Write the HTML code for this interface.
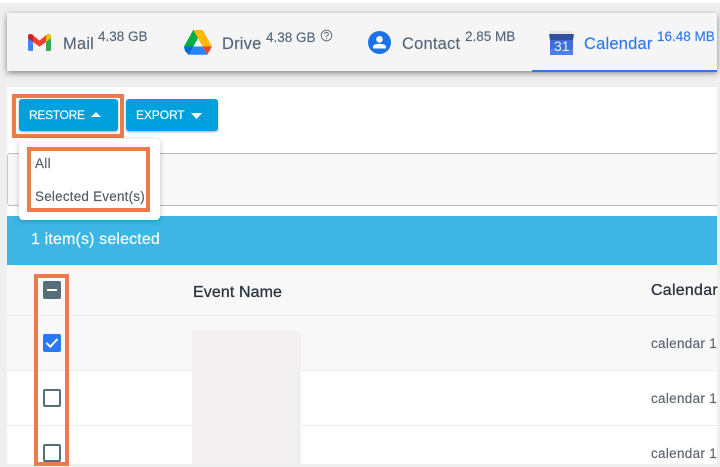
<!DOCTYPE html>
<html>
<head>
<meta charset="utf-8">
<style>
html,body{margin:0;padding:0;background:#fff}
#p{position:relative;width:720px;height:467px;overflow:hidden;background:#f0efef;font-family:"Liberation Sans",Arial,sans-serif;color:#56677a;-webkit-text-stroke:.15px currentColor}
#p div,#p span.a{position:absolute;white-space:nowrap}
.t{font-size:16.5px;line-height:20px;letter-spacing:.2px}
.s{font-size:13.5px;line-height:16px;letter-spacing:0}
.cb{left:43px;width:18px;height:18px;box-sizing:border-box;border-radius:2px}
.o{background:#ec7a4f}
.cell{font-size:13.5px;line-height:16px;color:#5a6470;left:651px;letter-spacing:.3px}
</style>
</head>
<body>
<div id="p">
<div style="left:0;top:0;width:720px;height:3px;background:#fff"></div>
<div style="left:7px;top:87px;width:710px;height:377px;background:#fff"></div>
<!-- tab bar -->
<div style="left:7px;top:13px;width:710px;height:58px;background:#f5f5f5;box-shadow:0 2px 6px rgba(0,0,0,.45)"></div>
<div style="left:532px;top:70px;width:185px;height:2px;background:#2979f2"></div>

<!-- gmail -->
<svg style="position:absolute;left:28px;top:34px" width="23" height="17" viewBox="0 0 23 17">
<path d="M0 3.5V15.5Q0 17 1.5 17H5V7Z" fill="#4285f4"/>
<path d="M23 3.5V15.5Q23 17 21.500 17H18V7Z" fill="#34a853"/>
<path d="M0 2.500Q0 0 2.500 0Q3.500 0 4.500 .8L11.500 6.500L18.500 .8Q19.500 0 20.500 0Q23 0 23 2.500V4L18 8L11.500 12.800L5 8L0 4Z" fill="#ea4335"/>
<path d="M18 1.300L18.500 .8Q19.500 0 20.500 0Q23 0 23 2.500V4L18 8Z" fill="#fbbc04"/>
<path d="M0 2.500Q0 0 2.500 0Q3.500 0 4.500 .8L5 1.300V8L0 4Z" fill="#c5221f"/>
</svg>
<div class="t" style="left:63px;top:34px">Mail</div>
<div class="s" style="left:98px;top:29px">4.38 GB</div>

<!-- drive -->
<svg style="position:absolute;left:184px;top:30px" width="28" height="25" viewBox="0 0 28 25">
<path d="M9.300 0H18.700L14 8.200H9.500L7 4Z" fill="#00832d"/>
<path d="M9.300 0L14 8.200L4.700 24.800L0 16.500Z" fill="#00ac47"/>
<path d="M18.700 0L28 16.500H18.700L9.300 0Z" fill="#ffba00"/>
<path d="M0 16.500H9.300L4.700 24.800L1 21Z" fill="#0066da"/>
<path d="M9.300 16.500H18.700L23.300 24.800H4.700Z" fill="#2684fc"/>
<path d="M18.700 16.500H28L23.300 24.800Z" fill="#ea4335"/>
</svg>
<div class="t" style="left:222px;top:34px">Drive</div>
<div class="s" style="left:266px;top:30px">4.38 GB</div>
<svg style="position:absolute;left:320px;top:29px" width="13" height="13" viewBox="0 0 13 13">
<circle cx="6.500" cy="6.500" r="5.300" fill="none" stroke="#5a6b78" stroke-width=".9"/>
<path d="M4.700 5.200A1.800 1.800 0 1 1 7.400 6.700Q6.500 7.200 6.500 8" fill="none" stroke="#5a6b78" stroke-width=".9"/>
<circle cx="6.500" cy="9.500" r=".6" fill="#5a6b78"/>
</svg>

<!-- contact -->
<svg style="position:absolute;left:368px;top:31px" width="23" height="23" viewBox="0 0 23 23">
<circle cx="11.500" cy="11.500" r="11.500" fill="#1a73e8"/>
<circle cx="11.500" cy="8.300" r="3.300" fill="#fff"/>
<path d="M5 16.200Q5 12.800 11.500 12.800T18 16.200V17.500H5Z" fill="#fff"/>
</svg>
<div class="t" style="left:402px;top:34px">Contact</div>
<div class="s" style="left:465px;top:29px">2.85 MB</div>

<!-- calendar -->
<div style="left:550px;top:31px;width:22px;height:4px;background:#e4e4e6"></div>
<div style="left:550px;top:35px;width:23px;height:20px;background:#3f6fd8"></div>
<div style="left:550px;top:49px;width:23px;height:6px;background:#4a80e8"></div>
<svg style="position:absolute;left:549px;top:34px" width="25" height="6" viewBox="0 0 25 6"><path d="M0 0H25L24 6H1Z" fill="#2f4f9f"/></svg>
<div style="left:554px;top:38px;font-size:14px;line-height:16px;color:#e8eefc;-webkit-text-stroke:0">31</div>
<div class="t" style="left:584px;top:34px;color:#2f78f2">Calendar</div>
<div class="s" style="left:657px;top:29px;color:#2f78f2">16.48 MB</div>

<!-- search row -->
<div style="left:7px;top:153px;width:710px;height:53px;box-sizing:border-box;background:#f8f8f8;border:1px solid #b9b9b9;border-left:1px solid #c9c9c9;border-right:none;border-radius:3px 0 0 3px"></div>

<!-- blue selection bar -->
<div style="left:7px;top:216px;width:710px;height:49px;background:#3db6e3"></div>
<div style="left:31px;top:231px;font-size:16px;line-height:18px;color:#fff;letter-spacing:.15px">1 item(s) selected</div>

<!-- table -->
<div style="left:7px;top:265px;width:710px;height:51px;background:#f8f8f8"></div>
<div style="left:7px;top:315px;width:710px;height:1px;background:#ececec"></div>
<div style="left:7px;top:316px;width:710px;height:54px;background:#f8f8f8"></div>
<div style="left:7px;top:370px;width:710px;height:1px;background:#ececec"></div>
<div style="left:7px;top:425px;width:710px;height:1px;background:#ececec"></div>
<div style="left:192px;top:331px;width:109px;height:133px;background:#f1efef"></div>
<div style="left:193px;top:284px;font-size:16px;line-height:18px;color:#29343f;letter-spacing:.1px;-webkit-text-stroke:.3px #29343f">Event Name</div>
<div style="left:651px;top:282px;font-size:16px;line-height:18px;color:#29343f;letter-spacing:.25px;-webkit-text-stroke:.3px #29343f">Calendar</div>
<div class="cell" style="top:336px">calendar 1</div>
<div class="cell" style="top:391px">calendar 1</div>
<div class="cell" style="top:446px">calendar 1</div>

<!-- checkboxes -->
<div class="cb" style="top:281px;background:#546e7a"></div>
<div style="left:47px;top:289px;width:10px;height:2px;background:#fff"></div>
<div class="cb" style="top:334px;background:#2979ff"></div>
<svg style="position:absolute;left:43px;top:334px" width="18" height="18" viewBox="0 0 18 18"><path d="M3.500 9L7.300 12.700L14.500 5" fill="none" stroke="#fff" stroke-width="2"/></svg>
<div class="cb" style="top:389px;border:2px solid #546e7a;background:#fff"></div>
<div class="cb" style="top:444px;border:2px solid #546e7a;background:#fff"></div>

<!-- checkbox highlight -->
<div class="o" style="left:34px;top:274px;width:35px;height:4px"></div>
<div class="o" style="left:34px;top:274px;width:4px;height:192px"></div>
<div class="o" style="left:65px;top:274px;width:4px;height:192px"></div>
<div class="o" style="left:34px;top:462px;width:35px;height:4px"></div>

<!-- buttons -->
<div style="left:12px;top:94px;width:112px;height:44px;box-sizing:border-box;border:4px solid #ec7a4f"></div>
<div style="left:19px;top:99px;width:99px;height:32px;background:#00a0dc;border-radius:3px;box-shadow:0 1px 2px rgba(0,0,0,.35)"></div>
<div style="left:29px;top:108px;font-size:12px;line-height:15px;color:#fff;letter-spacing:-.3px">RESTORE</div>
<svg style="position:absolute;left:91px;top:112px" width="10" height="5" viewBox="0 0 10 5"><path d="M5 0L10 5H0Z" fill="#fff"/></svg>
<div style="left:126px;top:99px;width:92px;height:32px;background:#00a0dc;border-radius:3px;box-shadow:0 1px 2px rgba(0,0,0,.35)"></div>
<div style="left:136px;top:108px;font-size:12px;line-height:15px;color:#fff;letter-spacing:-.1px">EXPORT</div>
<svg style="position:absolute;left:191px;top:113px" width="11" height="6" viewBox="0 0 11 6"><path d="M0 0H11L5.500 6Z" fill="#fff"/></svg>

<!-- dropdown -->
<div style="left:19px;top:139px;width:141px;height:81px;background:#fff;border-radius:4px;box-shadow:0 1px 6px rgba(0,0,0,.22)"></div>
<div style="left:27px;top:147px;width:123px;height:65px;box-sizing:border-box;border:4px solid #ec7a4f"></div>
<div style="left:35px;top:156px;font-size:13.5px;line-height:16px;color:#4f5b66;letter-spacing:.3px">All</div>
<div style="left:35px;top:189px;font-size:13.5px;line-height:16px;color:#4f5b66;letter-spacing:.2px">Selected Event(s)</div>
</div>
</body>
</html>
